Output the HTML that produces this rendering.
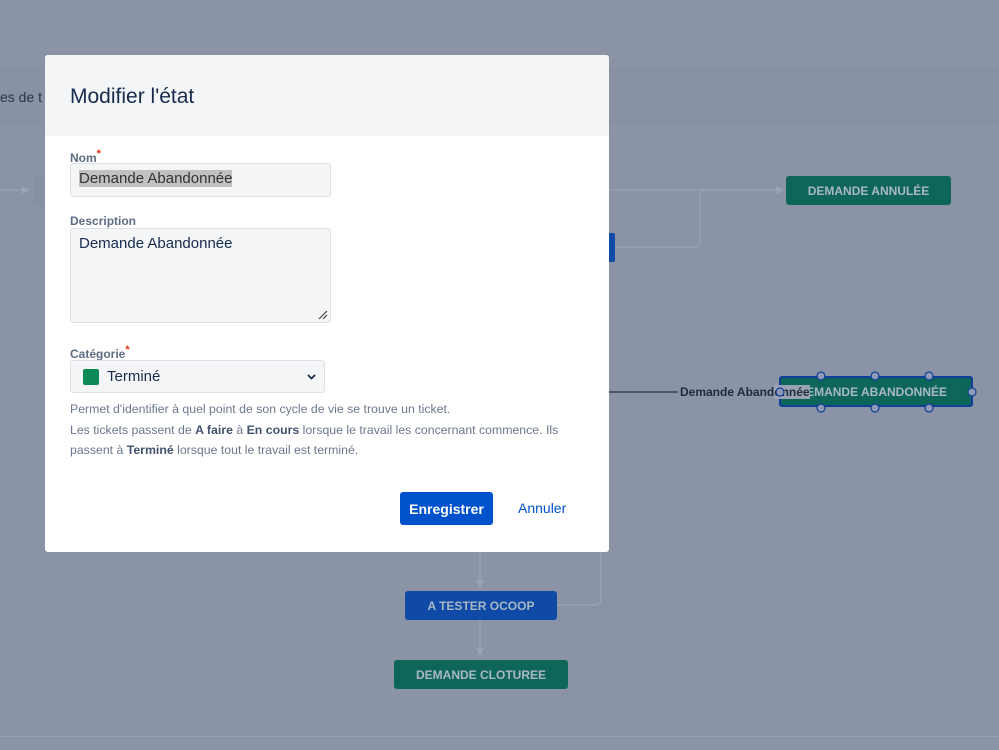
<!DOCTYPE html>
<html><head><meta charset="utf-8"><style>
*{box-sizing:border-box;margin:0;padding:0}
body{width:999px;height:750px;overflow:hidden;background:#8b94a6;font-family:"Liberation Sans",sans-serif;position:relative}
.abs{position:absolute}
.node{position:absolute;color:#aab8c4;font-weight:bold;font-size:12px;display:flex;align-items:center;justify-content:center;border-radius:3px}
.g{background:#0d6657}
.b{background:#0f4aa7}
.modal{position:absolute;left:45px;top:55px;width:564px;height:497px;background:#fff;border-radius:3px}
.hdr{height:81px;background:#f4f5f7;border-radius:3px 3px 0 0;padding:30px 25px;font-size:21px;color:#172b4d}
.lbl{position:absolute;left:25px;font-size:12px;color:#5e6c84;font-weight:bold}
.lbl sup{color:#de350b;font-size:11px}
.inp{position:absolute;left:25px;background:#f4f5f7;border:1px solid #dfe1e6;border-radius:3px;font-size:15px;color:#172b4d}
.help{position:absolute;left:25px;top:344px;font-size:12.3px;color:#6b778c;line-height:20.5px}
.help b{color:#42526e}
</style></head><body>
<div class="abs" style="left:0;top:68px;width:999px;height:55px;background:#8892a4;border-top:1px solid #8590a2;border-bottom:1px solid #8590a2"></div>
<div class="abs" style="left:0;top:89px;font-size:14px;color:#2b3548">es de t</div>
<div class="abs" style="left:0;top:736px;width:999px;height:1px;background:#959eb0"></div>
<svg class="abs" style="left:0;top:0" width="999" height="750">
<g stroke="#9ba5b6" fill="none" stroke-width="1.2">
<path d="M0 190H30"/><path d="M609 190H778"/><path d="M615 247H694q6 0 6-6V196q0-6 6-6"/>
<path d="M480 552V582"/><path d="M480 620V652"/><path d="M557 605H595q6 0 6-6V552"/>
</g>
<g fill="#9ba5b6"><path d="M776 186l8 4-8 4z"/><path d="M476 580l4 8 4-8z"/><path d="M476 648l4 8 4-8z"/><path d="M22 186l8 4-8 4z"/></g>
<path d="M609 392H678" stroke="#2b3548" stroke-width="1.2"/>
</svg>
<div class="abs" style="left:34px;top:176px;width:14px;height:29px;background:#8791a4;border-radius:2px"></div>
<div class="abs" style="left:605px;top:233px;width:10px;height:29px;background:#0f4aa7;border-radius:2px"></div>
<div class="node g" style="left:786px;top:176px;width:165px;height:29px">DEMANDE ANNULÉE</div>
<div class="node g" style="left:779px;top:376px;width:194px;height:31px;border:2px solid #0f3f99;justify-content:flex-end;padding-right:24px">DEMANDE ABANDONNÉE</div>
<div class="abs" style="left:680px;top:385px;font-size:12px;font-weight:bold;color:#1f2a3c;background:#8b94a6">Demande Aband<span style="background:#9aa3b3">onnée</span></div>
<svg class="abs" style="left:770px;top:368px" width="212" height="48">
<g fill="#8e9ab6" stroke="#0f3f99" stroke-width="1.2">
<circle cx="51" cy="8" r="4"/><circle cx="105" cy="8" r="4"/><circle cx="159" cy="8" r="4"/>
<circle cx="51" cy="40" r="4"/><circle cx="105" cy="40" r="4"/><circle cx="159" cy="40" r="4"/>
<circle cx="10" cy="24" r="4"/><circle cx="202" cy="24" r="4"/></g></svg>
<div class="node b" style="left:405px;top:591px;width:152px;height:29px">A TESTER OCOOP</div>
<div class="node g" style="left:394px;top:660px;width:174px;height:29px">DEMANDE CLOTUREE</div>

<div class="modal">
<div class="hdr">Modifier l'état</div>
<div class="lbl" style="top:93px">Nom<sup>*</sup></div>
<div class="inp" style="top:108px;width:261px;height:34px;padding:6px 8px"><span style="background:#c1c1c1;color:#333">Demande Abandonnée</span></div>
<div class="lbl" style="top:159px">Description</div>
<div class="inp" style="top:173px;width:261px;height:95px;padding:6px 8px">Demande Abandonnée
<svg class="abs" style="right:2px;bottom:2px" width="10" height="10"><path d="M1 9L9 1M5 9L9 5" stroke="#333" stroke-width="1"/></svg></div>
<div class="lbl" style="top:289px">Catégorie<sup>*</sup></div>
<div class="inp" style="top:305px;width:255px;height:33px;padding:0 12px;display:flex;align-items:center">
<span style="width:16px;height:16px;background:#0b8a58;border-radius:2px;margin-right:8px"></span>Terminé
<svg class="abs" style="right:8px;top:13px" width="9" height="7"><path d="M1 1l3.5 3.5L8 1" stroke="#172b4d" stroke-width="1.8" fill="none"/></svg></div>
<div class="help">Permet d'identifier à quel point de son cycle de vie se trouve un ticket.<br>Les tickets passent de <b>A faire</b> à <b>En cours</b> lorsque le travail les concernant commence. Ils<br>passent à <b>Terminé</b> lorsque tout le travail est terminé.</div>
<div class="abs" style="left:355px;top:437px;width:93px;height:33px;background:#0052cc;border-radius:3px;color:#fff;font-weight:bold;font-size:14px;display:flex;align-items:center;justify-content:center">Enregistrer</div>
<div class="abs" style="left:473px;top:445px;font-size:14px;color:#0052cc">Annuler</div>
</div>
</body></html>
